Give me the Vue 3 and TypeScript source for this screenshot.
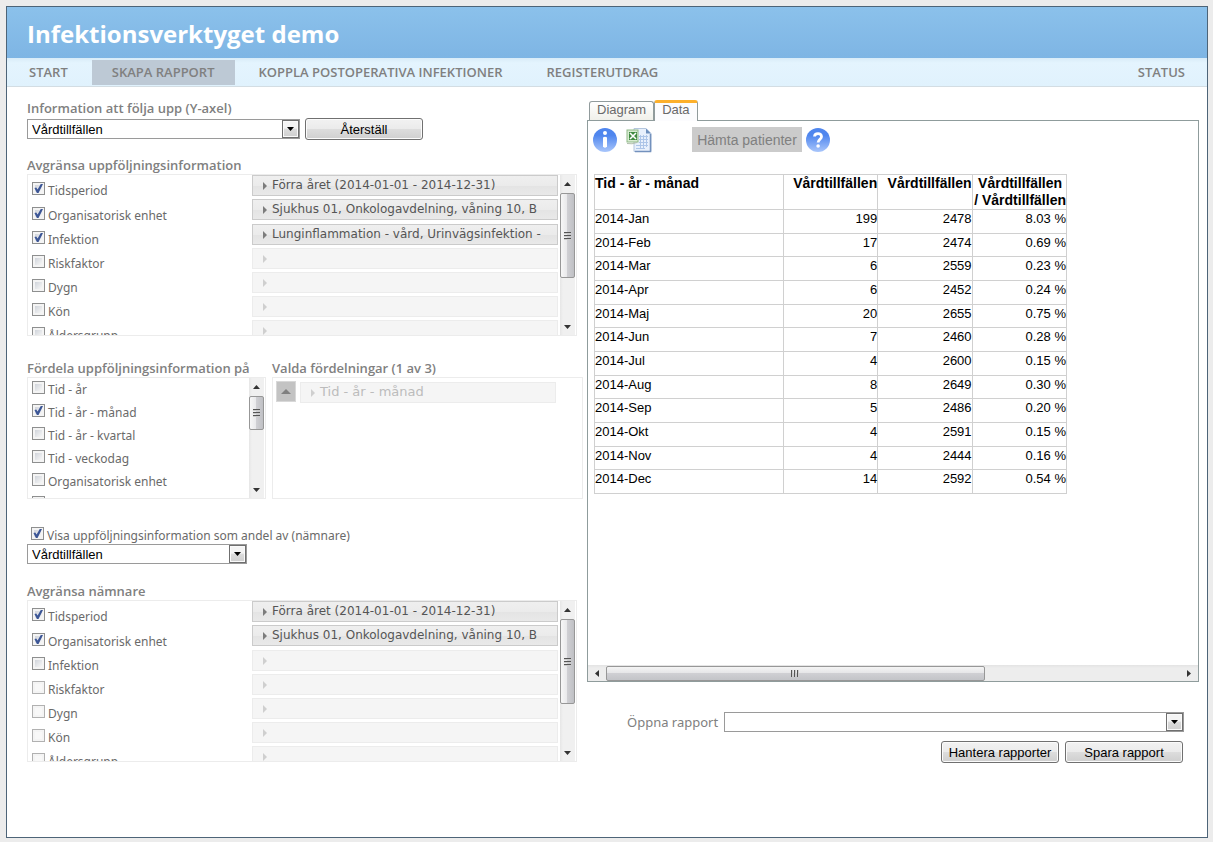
<script setup lang="ts">
import { ref } from 'vue'

interface Filter {
  label: string
  checked: boolean
  disabled?: boolean
  value?: string
}

interface Row {
  month: string
  count: number
  total: number
  share: string
}

const period = 'Förra året (2014-01-01 - 2014-12-31)'
const unit = 'Sjukhus 01, Onkologavdelning, våning 10, B'

const filters = ref<Filter[]>([
  { label: 'Tidsperiod', checked: true, value: period },
  { label: 'Organisatorisk enhet', checked: true, value: unit },
  { label: 'Infektion', checked: true, value: 'Lunginflammation - vård, Urinvägsinfektion -' },
  { label: 'Riskfaktor', checked: false },
  { label: 'Dygn', checked: false },
  { label: 'Kön', checked: false },
  { label: 'Åldersgrupp', checked: false },
])

const denominatorFilters = ref<Filter[]>([
  { label: 'Tidsperiod', checked: true, value: period },
  { label: 'Organisatorisk enhet', checked: true, value: unit },
  { label: 'Infektion', checked: false },
  { label: 'Riskfaktor', checked: false, disabled: true },
  { label: 'Dygn', checked: false, disabled: true },
  { label: 'Kön', checked: false, disabled: true },
  { label: 'Åldersgrupp', checked: false, disabled: true },
])

const splits = ref<Filter[]>([
  { label: 'Tid - år', checked: false },
  { label: 'Tid - år - månad', checked: true },
  { label: 'Tid - år - kvartal', checked: false },
  { label: 'Tid - veckodag', checked: false },
  { label: 'Organisatorisk enhet', checked: false },
  { label: 'Infektion', checked: false },
])

const showShare = ref(true)

const rows: Row[] = [
  { month: '2014-Jan', count: 199, total: 2478, share: '8.03 %' },
  { month: '2014-Feb', count: 17, total: 2474, share: '0.69 %' },
  { month: '2014-Mar', count: 6, total: 2559, share: '0.23 %' },
  { month: '2014-Apr', count: 6, total: 2452, share: '0.24 %' },
  { month: '2014-Maj', count: 20, total: 2655, share: '0.75 %' },
  { month: '2014-Jun', count: 7, total: 2460, share: '0.28 %' },
  { month: '2014-Jul', count: 4, total: 2600, share: '0.15 %' },
  { month: '2014-Aug', count: 8, total: 2649, share: '0.30 %' },
  { month: '2014-Sep', count: 5, total: 2486, share: '0.20 %' },
  { month: '2014-Okt', count: 4, total: 2591, share: '0.15 %' },
  { month: '2014-Nov', count: 4, total: 2444, share: '0.16 %' },
  { month: '2014-Dec', count: 14, total: 2592, share: '0.54 %' },
]
</script>

<template>
  <div class="page">
  <div class="window">
    <header class="banner"><h1>Infektionsverktyget demo</h1></header>
    <nav class="menu">
      <a href="#start">START</a>
      <a href="#skapa" class="current">SKAPA RAPPORT</a>
      <a href="#koppla">KOPPLA POSTOPERATIVA INFEKTIONER</a>
      <a href="#register">REGISTERUTDRAG</a>
      <a href="#status" class="last">STATUS</a>
    </nav>

    <main class="columns">
      <section class="settings">
        <label class="heading" for="measure">Information att följa upp (Y-axel)</label>
        <div class="measure-row">
          <div class="dropdown measure">
            <select id="measure"><option>Vårdtillfällen</option></select>
            <span class="drop-arrow"><svg viewBox="0 0 7 4"><path d="M0 0h7L3.500 4z" /></svg></span>
          </div>
          <button type="button" class="push">Återställ</button>
        </div>

        <h2 class="heading limit-heading">Avgränsa uppföljningsinformation</h2>
        <div class="box">
          <ul class="filters">
            <li v-for="(f, i) in filters" :key="i">
              <label class="check"><input v-model="f.checked" type="checkbox" /><span>{{ f.label }}</span></label>
              <button type="button" class="bar" :disabled="!f.value">
                <svg viewBox="0 0 4 8"><path d="M0 0L4 4L0 8z" /></svg><span>{{ f.value }}</span>
              </button>
            </li>
          </ul>
          <div class="scroll">
            <svg class="tip" viewBox="0 0 7 4"><path d="M0 4L3.500 0L7 4z" /></svg>
            <div class="track"><div class="thumb long"><i></i></div></div>
            <svg class="tip" viewBox="0 0 7 4"><path d="M0 0h7L3.500 4z" /></svg>
          </div>
        </div>

        <div class="split-row">
          <div class="split-source">
            <h2 class="heading">Fördela uppföljningsinformation på</h2>
            <div class="box short">
              <ul class="splits">
                <li v-for="(s, i) in splits" :key="i">
                  <label class="check"><input v-model="s.checked" type="checkbox" /><span>{{ s.label }}</span></label>
                </li>
              </ul>
              <div class="scroll">
                <svg class="tip" viewBox="0 0 7 4"><path d="M0 4L3.500 0L7 4z" /></svg>
                <div class="track"><div class="thumb small"><i></i></div></div>
                <svg class="tip" viewBox="0 0 7 4"><path d="M0 0h7L3.500 4z" /></svg>
              </div>
            </div>
          </div>
          <div class="split-chosen">
            <h2 class="heading">Valda fördelningar (1 av 3)</h2>
            <div class="box short chosen">
              <button type="button" class="move" aria-label="Flytta upp" disabled>
                <svg viewBox="0 0 10 5"><path d="M0 5L5 0L10 5z" /></svg>
              </button>
              <button type="button" class="bar" disabled>
                <svg viewBox="0 0 4 8"><path d="M0 0L4 4L0 8z" /></svg><span>Tid - år - månad</span>
              </button>
            </div>
          </div>
        </div>

        <label class="check share"><input v-model="showShare" type="checkbox" /><span>Visa uppföljningsinformation som andel av (nämnare)</span></label>
        <div class="dropdown denominator">
          <select aria-label="Nämnare"><option>Vårdtillfällen</option></select>
          <span class="drop-arrow"><svg viewBox="0 0 7 4"><path d="M0 0h7L3.500 4z" /></svg></span>
        </div>

        <h2 class="heading denominator-heading">Avgränsa nämnare</h2>
        <div class="box">
          <ul class="filters">
            <li v-for="(f, i) in denominatorFilters" :key="i">
              <label class="check"><input v-model="f.checked" type="checkbox" :disabled="f.disabled" /><span>{{ f.label }}</span></label>
              <button type="button" class="bar" :disabled="!f.value">
                <svg viewBox="0 0 4 8"><path d="M0 0L4 4L0 8z" /></svg><span>{{ f.value }}</span>
              </button>
            </li>
          </ul>
          <div class="scroll">
            <svg class="tip" viewBox="0 0 7 4"><path d="M0 4L3.500 0L7 4z" /></svg>
            <div class="track"><div class="thumb long"><i></i></div></div>
            <svg class="tip" viewBox="0 0 7 4"><path d="M0 0h7L3.500 4z" /></svg>
          </div>
        </div>
      </section>

      <section class="result">
        <div class="tabs" role="tablist">
          <button type="button" role="tab" class="tab">Diagram</button>
          <button type="button" role="tab" class="tab active" aria-selected="true">Data</button>
        </div>
        <div class="panel">
          <div class="content">
            <div class="tools">
              <button type="button" class="icon" aria-label="Information">
                <svg viewBox="0 0 24 24">
                  <defs><linearGradient id="blue" x2="0" y2="1"><stop offset="0.300" stop-color="#4f86ee" /><stop offset="1" stop-color="#a9c6fb" /></linearGradient></defs>
                  <circle cx="12" cy="12" r="12" fill="url(#blue)" />
                  <circle cx="12" cy="5" r="2" fill="#fff" />
                  <path d="M10 9.500q2-1.500 4 0v9q-2 2.500-4 0z" fill="#fff" />
                </svg>
              </button>
              <button type="button" class="icon excel" aria-label="Exportera till Excel">
                <svg viewBox="0 0 26 26">
                  <path d="M8 1.500h12l5 5v18H8z" fill="#e8f0fc" stroke="#b4c6de" />
                  <path d="M20 1.500l5 5h-5z" fill="#6d8fbd" />
                  <path d="M24.500 7v17.500H9" fill="none" stroke="#7391bd" stroke-width="1.500" />
                  <path d="M13 9.500h9M13 12.500h9M13 15.500h9M10 18.500h12M10 21.500h9M14.500 8v14M17.500 8v14M20.500 8v12" stroke="#adc5e8" fill="none" />
                  <rect x="1" y="3" width="11" height="12" fill="#d9ecd3" stroke="#8fb987" />
                  <rect x="3" y="5" width="8" height="8" fill="#3f8a3f" />
                  <path d="M4 6l6 6M10 6l-6 6" stroke="#fff" stroke-width="1.600" />
                  <path d="M1 16.500q5 1 10-1" stroke="#b3bfae" fill="none" />
                </svg>
              </button>
              <button type="button" class="fetch" disabled>Hämta patienter</button>
              <button type="button" class="icon" aria-label="Hjälp">
                <svg viewBox="0 0 24 24">
                  <circle cx="12" cy="12" r="12" fill="url(#blue)" />
                  <path d="M8.500 8.500C8.800 4.600 15.600 4.700 15.500 8.700C15.400 11.200 12.100 11.300 12.100 14.600" fill="none" stroke="#fff" stroke-width="2.800" />
                  <circle cx="12.100" cy="18" r="1.800" fill="#fff" />
                </svg>
              </button>
            </div>
            <table>
              <colgroup><col class="c-month" /><col class="c-num" /><col class="c-num" /><col class="c-num" /></colgroup>
              <thead>
                <tr>
                  <th class="month">Tid - år - månad</th>
                  <th>Vårdtillfällen</th>
                  <th>Vårdtillfällen</th>
                  <th>Vårdtillfällen&nbsp;<br />/ Vårdtillfällen</th>
                </tr>
              </thead>
              <tbody>
                <tr v-for="r in rows" :key="r.month">
                  <td class="month">{{ r.month }}</td>
                  <td>{{ r.count }}</td>
                  <td>{{ r.total }}</td>
                  <td>{{ r.share }}</td>
                </tr>
              </tbody>
            </table>
          </div>
          <div class="hscroll">
            <svg class="side" viewBox="0 0 4 7"><path d="M4 0L0 3.500L4 7z" /></svg>
            <div class="htrack"><div class="hthumb"><i></i></div></div>
            <svg class="side" viewBox="0 0 4 7"><path d="M0 0L4 3.500L0 7z" /></svg>
          </div>
        </div>

        <div class="open-row">
          <label for="report">Öppna rapport</label>
          <div class="dropdown">
            <select id="report"><option></option></select>
            <span class="drop-arrow"><svg viewBox="0 0 7 4"><path d="M0 0h7L3.500 4z" /></svg></span>
          </div>
        </div>
        <div class="actions">
          <button type="button" class="push">Hantera rapporter</button>
          <button type="button" class="push">Spara rapport</button>
        </div>
      </section>
    </main>
  </div>
  </div>
</template>

<style>
body {
  margin: 0;
  background: #ececec;
}
</style>

<style scoped>
* {
  box-sizing: border-box;
}
.page {
  display: flex;
  min-height: 100vh;
  padding: 6px 5px 4px 6px;
}
.window {
  flex: 1;
  min-width: 0;
  border: 1px solid #4d6478;
  background: #fff;
  color: #6a6a6a;
  font: 12px/18px "Noto Sans", "Open Sans", sans-serif;
}
.banner {
  height: 51px;
  padding: 0 20px;
  display: flex;
  align-items: center;
  background: linear-gradient(#8bc1eb, #7eb5e4);
}
h1 {
  margin: 0;
  padding-top: 3px;
  color: #fff;
  font-family: "Open Sans", sans-serif;
  font-size: 24px;
  line-height: 30px;
}
.menu {
  display: flex;
  align-items: center;
  gap: 4px;
  height: 29px;
  padding: 0 2px;
  border-bottom: 1px solid #d3dde3;
  background: linear-gradient(#d9ecf8, #e4f4fe 5px, #e0f2fd);
}
.menu a {
  padding: 0 20px;
  color: #808080;
  font-family: "Open Sans", sans-serif;
  font-size: 13px;
  font-weight: 600;
  line-height: 25px;
  text-decoration: none;
  white-space: nowrap;
}
.menu .current {
  background: #bdc9d5;
}
.menu .last {
  margin-left: auto;
}
.columns {
  display: grid;
  grid-template-columns: minmax(0, 139fr) minmax(0, 153fr);
  gap: 4px;
  padding: 12px 8px 20px 20px;
}
.settings {
  display: flex;
  flex-direction: column;
  align-items: flex-start;
  padding-bottom: 1px;
}
.heading {
  margin: 0;
  color: #808080;
  font-family: "Open Sans", sans-serif;
  font-size: 13px;
  font-weight: 600;
  line-height: 18px;
  white-space: nowrap;
}
.limit-heading {
  margin-top: 16px;
}
.denominator-heading {
  margin-top: 18px;
}
.measure-row {
  display: flex;
  align-items: center;
  gap: 5px;
  width: 100%;
  margin-top: 1px;
}
.dropdown {
  position: relative;
  height: 20px;
}
.measure {
  width: 273px;
}
.denominator {
  width: 220px;
}
.dropdown select {
  appearance: none;
  display: block;
  width: 100%;
  height: 20px;
  padding: 1px 20px 0 4px;
  border: 1px solid #9a9a9a;
  border-radius: 0;
  background: #fff;
  color: #000;
  font: 13px/17px "Liberation Sans", Arial, sans-serif;
}
.drop-arrow {
  position: absolute;
  top: 1px;
  right: 1px;
  display: grid;
  place-items: center;
  width: 17px;
  height: 18px;
  border: 1px solid #6f6f6f;
  box-shadow: inset 0 0 0 1px #fafafa;
  background: linear-gradient(#f4f4f4 45%, #dcdcdc 50%, #cfcfcf);
  pointer-events: none;
}
.drop-arrow svg {
  width: 7px;
  height: 4px;
}
.push {
  width: 118px;
  height: 22px;
  padding: 1px 0 0;
  border: 1px solid #707070;
  border-radius: 3px;
  box-shadow: inset 0 0 0 1px #fbfbfb;
  background: linear-gradient(#f2f2f2, #ebebeb 48%, #dddddd 50%, #cfcfcf);
  color: #000;
  font: 13px/18px "Liberation Sans", Arial, sans-serif;
}
.box {
  display: flex;
  width: 100%;
  max-width: 550px;
  height: 162px;
  border: 1px solid #ececec;
  overflow: hidden;
}
.short {
  height: 122px;
}
ul {
  flex: 1;
  min-width: 0;
  margin: 0;
  padding: 0 2px 0 4px;
  list-style: none;
}
.filters li {
  display: flex;
  justify-content: space-between;
  height: 24px;
}
.filters li:nth-child(2) {
  height: 25px;
}
.filters .check {
  align-self: flex-end;
}
.filters .bar {
  width: 306px;
}
.check {
  display: flex;
  align-items: flex-start;
  gap: 3px;
  height: 17px;
  line-height: 17px;
  white-space: nowrap;
}
.check input {
  appearance: none;
  flex: none;
  width: 13px;
  height: 13px;
  margin: 0;
  border: 1px solid #8e8f8f;
  background: linear-gradient(135deg, #c5cad3, #f6f6f6 80%);
  box-shadow: inset 0 0 0 2px #f4f4f4;
}
.check input:disabled {
  border-color: #b1b1b1;
  background: #f8f8f8;
}
.check input:checked::after {
  content: "";
  display: block;
  width: 9px;
  height: 9px;
  margin: 1px;
  background: #3c5696;
  clip-path: polygon(5% 45%, 25% 38%, 40% 62%, 75% 0, 100% 0, 50% 100%, 32% 100%);
}
.bar {
  display: flex;
  align-items: center;
  gap: 5px;
  height: 21px;
  padding: 0 0 2px 10px;
  border: 1px solid #cbcbcb;
  background: linear-gradient(#efefef, #ebebeb 50%, #e4e4e4 55%, #e9e9e9);
  color: #555;
  font: 12px/18px "DejaVu Sans", Verdana, sans-serif;
  text-align: left;
  white-space: nowrap;
  overflow: hidden;
}
.bar svg {
  flex: none;
  width: 4px;
  height: 8px;
  margin-top: 2px;
  fill: #7c7c7c;
}
.bar:disabled {
  border-color: #ececec;
  background: #f5f5f5;
  color: #bcbcbc;
}
.bar:disabled svg {
  fill: #cfcfcf;
}
.scroll {
  display: flex;
  flex-direction: column;
  align-items: center;
  width: 15px;
  margin-right: 1px;
  padding: 7px 0 6px;
  background: linear-gradient(90deg, #e6e6e6, #f0f0f0 3px, #f0f0f0);
}
.tip {
  flex: none;
  width: 7px;
  height: 4px;
  fill: #333;
}
.track {
  flex: 1;
  width: 100%;
  padding-top: 7px;
}
.thumb {
  display: grid;
  place-items: center;
  width: 15px;
  border: 1px solid #979797;
  border-radius: 2px;
  background: linear-gradient(90deg, #f7f7f7, #e9e9eb 45%, #cfcfd3 50%, #bfc0c4);
}
.long {
  height: 85px;
}
.small {
  height: 34px;
}
.thumb i {
  width: 7px;
  height: 8px;
  background: repeating-linear-gradient(#555 0 1px, #ccc 1px 2px, transparent 2px 3px);
}
.split-row {
  display: grid;
  grid-template-columns: minmax(0, 239fr) minmax(0, 311fr);
  gap: 6px;
  width: 100%;
  margin-top: 23px;
}
.splits {
  padding-top: 3px;
}
.splits li {
  height: 23px;
}
.chosen {
  gap: 4px;
  padding: 3px 26px 0 3px;
}
.chosen .bar {
  flex: 1;
  margin-top: 1px;
  font-size: 13px;
}
.move {
  display: grid;
  place-items: center;
  width: 20px;
  height: 21px;
  padding: 0;
  border: 1px solid #d8d8d8;
  background: #c3c3c3;
}
.move svg {
  width: 10px;
  height: 5px;
  fill: #808080;
}
.share {
  margin: 28px 0 0 4px;
}
.result {
  display: flex;
  flex-direction: column;
  padding-top: 1px;
}
.tabs {
  display: flex;
  align-items: flex-end;
  height: 21px;
  margin: 0 0 -1px 2px;
  z-index: 1;
}
.tab {
  height: 19px;
  margin-bottom: 1px;
  padding: 0 7px 2px;
  border: 1px solid #919b9c;
  border-bottom: 0;
  border-radius: 3px 3px 0 0;
  background: linear-gradient(#fff, #f0f0ea);
  color: #6a6a6a;
  font: 13px/16px "Liberation Sans", Arial, sans-serif;
}
.tab.active {
  height: 21px;
  margin-bottom: 0;
  padding-bottom: 4px;
  border-top: 3px solid #fdb02c;
  background: #fcfcfe;
  line-height: 14px;
}
.panel {
  flex: 1;
  display: flex;
  flex-direction: column;
  border: 1px solid #8f9c9c;
}
.content {
  flex: 1;
  padding: 6px 6px 0;
  overflow: hidden;
}
.tools {
  display: flex;
  align-items: center;
  height: 25px;
  margin-bottom: 22px;
}
.icon {
  width: 24px;
  height: 24px;
  margin-left: -1px;
  padding: 0;
  border: 0;
  background: none;
}
.icon svg {
  display: block;
  width: 100%;
  height: 100%;
}
.excel {
  width: 26px;
  height: 26px;
  margin: 0 40px 0 9px;
}
.fetch {
  width: 110px;
  height: 25px;
  margin-right: 5px;
  padding: 0;
  border: 0;
  background: #cbcbcb;
  color: #808080;
  font: 14px/20px "Liberation Sans", Arial, sans-serif;
}
table {
  width: 473px;
  table-layout: fixed;
  border-collapse: collapse;
  color: #000;
  font: 13px/17px "Liberation Sans", Arial, sans-serif;
}
.c-month {
  width: 40%;
}
.c-num {
  width: 20%;
}
th,
td {
  padding: 0;
  border: 1px solid #d0d0d0;
  text-align: right;
  vertical-align: top;
  white-space: nowrap;
}
th {
  font-size: 14px;
}
th.month,
td.month {
  text-align: left;
}
thead tr {
  height: 35px;
}
tbody tr {
  height: 24px;
}
tbody tr:nth-child(3n + 2) {
  height: 23px;
}
.hscroll {
  display: flex;
  align-items: center;
  height: 16px;
  padding: 0 7px;
  background: linear-gradient(#e3e3e3, #ededed 3px);
}
.side {
  flex: none;
  width: 4px;
  height: 7px;
  fill: #333;
}
.htrack {
  flex: 1;
  padding: 0 7px;
}
.hthumb {
  display: grid;
  place-items: center;
  width: 66%;
  height: 15px;
  border: 1px solid #979797;
  border-radius: 2px;
  background: linear-gradient(#f4f4f4, #e6e6e8 45%, #cfcfd3 50%, #c3c4c8);
}
.hthumb i {
  width: 8px;
  height: 7px;
  background: repeating-linear-gradient(90deg, #555 0 1px, #ccc 1px 2px, transparent 2px 3px);
}
.open-row {
  display: flex;
  align-items: center;
  gap: 6px;
  margin: 30px 15px 0 40px;
}
.open-row label {
  color: #808080;
  font-size: 13px;
}
.open-row .dropdown {
  flex: 1;
}
.actions {
  display: flex;
  justify-content: flex-end;
  gap: 6px;
  margin: 9px 16px 0 0;
}
</style>
